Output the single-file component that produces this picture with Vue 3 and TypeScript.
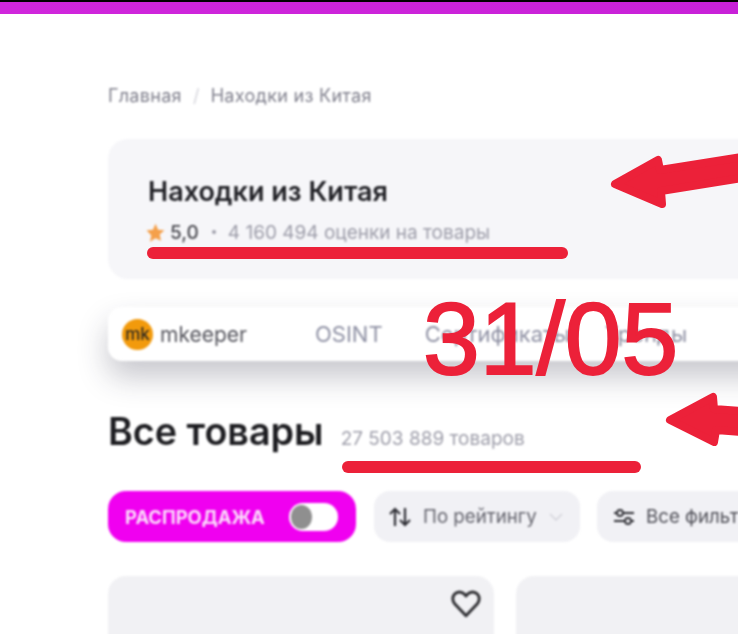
<template>
  <div class="page">
    <div class="topbar"></div>

    <main class="content">
      <nav class="crumbs">
        <span>Главная</span>
        <span class="crumbs__sep">/</span>
        <span>Находки из Китая</span>
      </nav>

      <section class="seller">
        <h1 class="seller__name">Находки из Китая</h1>
        <div class="seller__rating">
          <svg class="star" width="21" height="21" viewBox="0 0 24 24" fill="#f5a04a">
            <path d="M12 2l3 6.800 7.200.7-5.400 4.800 1.600 7.200L12 18.700l-6.400 3.800 1.600-7.200L1.800 9.500 9 8.800z"></path>
          </svg>
          <b>5,0</b>
          <span class="dot"></span>
          <span class="seller__count">4 160 494 оценки на товары</span>
        </div>
      </section>

      <section class="tabs">
        <div class="brand">
          <span class="brand__logo">mk</span>
          <span class="brand__name">mkeeper</span>
        </div>
        <span v-for="tab in tabs" :key="tab" class="tabs__item">{{ tab }}</span>
      </section>

      <section class="heading">
        <h2>Все товары</h2>
        <span>27 503 889 товаров</span>
      </section>

      <section class="filters">
        <div class="sale">
          <span class="sale__label">РАСПРОДАЖА</span>
          <span class="sale__toggle"><i></i></span>
        </div>
        <div class="chip chip--sort">
          <svg width="24" height="22" viewBox="0 0 24 22" fill="none" stroke="#2f2f35" stroke-width="2.200">
            <path d="M7 20V3M2 8l5-5 5 5"></path>
            <path d="M17 2v17M12 14l5 5 5-5"></path>
          </svg>
          <span>По рейтингу</span>
          <svg width="16" height="10" viewBox="0 0 16 10" fill="none" stroke="#d3d3da" stroke-width="1.500">
            <path d="M2 2l6 6 6-6"></path>
          </svg>
        </div>
        <div class="chip chip--filters">
          <svg width="22" height="20" viewBox="0 0 22 20" fill="none" stroke="#2f2f35" stroke-width="1.800">
            <path d="M1 6h20M1 14h20"></path>
            <circle cx="7" cy="6" r="3" fill="#f1f1f5"></circle>
            <circle cx="15" cy="14" r="3" fill="#f1f1f5"></circle>
          </svg>
          <span>Все фильтры</span>
        </div>
      </section>

      <section class="products">
        <article class="product">
          <svg class="product__fav" width="32" height="32" viewBox="0 0 24 24" fill="none" stroke="#2f2f33" stroke-width="2.200" stroke-linejoin="round">
            <path d="M12 21.500L3.500 12.500a5.300 5.300 0 0 1 0-7.200 4.900 4.900 0 0 1 7.200 0L12 6.700l1.300-1.400a4.900 4.900 0 0 1 7.200 0 5.300 5.300 0 0 1 0 7.200z"></path>
          </svg>
        </article>
        <article class="product"></article>
      </section>
    </main>

    <svg class="marks" width="738" height="634" viewBox="0 0 738 634">
      <g fill="none" stroke="#ec2139" stroke-linecap="round" stroke-linejoin="round">
        <path d="M153 253L562 253" stroke-width="12"></path>
        <path d="M348 467L635 467" stroke-width="12"></path>
      </g>
      <g fill="#ec2139" stroke="#ec2139" stroke-width="8" stroke-linejoin="round">
        <path d="M615 184L658 160L660 170L742 157L742 178L661 191L662 204z"></path>
        <path d="M670 420L713 397L714 409L742 411L742 432L716 430L714 442z"></path>
      </g>
    </svg>
    <div class="stamp">31/05</div>
  </div>
</template>

<script setup lang="ts">
const tabs: string[] = ['OSINT', 'Сертификаты', 'Тренды']
</script>

<style>
html,
body {
  margin: 0;
  background: #fff;
}
</style>

<style scoped>
.page {
  position: relative;
  width: 738px;
  height: 634px;
  overflow: hidden;
  background: #fff;
  font-family: Inter, "Liberation Sans", sans-serif;
}

.topbar {
  height: 12px;
  border-top: 2px solid #000;
  background: linear-gradient(90deg, #d026dc, #c821d8);
  filter: blur(0.5px);
}

.content {
  width: 760px;
  padding: 71px 0 0 108px;
  filter: blur(0.8px);
}

.crumbs {
  display: flex;
  gap: 11px;
  height: 20px;
  align-items: center;
  font-size: 18px;
  letter-spacing: 0.3px;
  color: #7f7f8c;
}

.crumbs__sep {
  color: #d5d5dc;
}

.seller {
  height: 140px;
  margin-top: 34px;
  padding: 38px 0 0 40px;
  box-sizing: border-box;
  border-radius: 20px;
  background: #f6f6f9;
}

.seller__name {
  margin: 0;
  font-size: 27px;
  line-height: 30px;
  font-weight: 600;
  letter-spacing: 0;
  color: #222227;
  white-space: nowrap;
}

.seller__rating {
  display: flex;
  align-items: center;
  margin: 15px 0 0 -3px;
  height: 20px;
  font-size: 19px;
  color: #9d9da9;
}

.seller__rating b {
  margin-left: 4px;
  font-weight: 500;
  color: #47474e;
}

.dot {
  width: 4px;
  height: 4px;
  margin: 0 12px 0 13px;
  border-radius: 50%;
  background: #9d9da9;
}

.seller__count {
  white-space: nowrap;
}

.tabs {
  display: flex;
  align-items: center;
  height: 54px;
  margin-top: 28px;
  padding-left: 14px;
  border-radius: 14px;
  background: #fff;
  box-shadow: 0 16px 30px rgba(40, 40, 60, 0.26);
}

.brand {
  display: flex;
  align-items: center;
  gap: 7px;
  width: 193px;
  flex-shrink: 0;
}

.brand__logo {
  display: flex;
  align-items: center;
  justify-content: center;
  width: 31px;
  height: 31px;
  border-radius: 50%;
  background: #f29a0c;
  font-size: 17px;
  font-weight: 500;
  color: #2d2820;
}

.brand__name {
  font-size: 21px;
  color: #55555d;
}

.tabs__item {
  margin-right: 35px;
  font-size: 22px;
  color: #8f91a4;
  white-space: nowrap;
}

.tabs__item:first-of-type {
  margin-right: 42px;
}

.heading {
  display: flex;
  align-items: baseline;
  gap: 17px;
  margin-top: 47px;
}

.heading h2 {
  margin: 0;
  font-size: 37.700px;
  line-height: 46px;
  font-weight: 600;
  color: #1d1d21;
  white-space: nowrap;
}

.heading span {
  font-size: 19px;
  color: #9d9da9;
  white-space: nowrap;
}

.filters {
  display: flex;
  margin-top: 37px;
}

.sale {
  display: flex;
  align-items: center;
  justify-content: space-between;
  width: 248px;
  height: 51px;
  margin-right: 18px;
  padding: 0 18px 0 17px;
  box-sizing: border-box;
  border-radius: 18px;
  background: #f000f0;
}

.sale__label {
  font-size: 18.400px;
  font-weight: 700;
  color: #fbdcfb;
}

.sale__toggle {
  display: flex;
  align-items: center;
  width: 49px;
  height: 28px;
  padding-left: 2px;
  box-sizing: border-box;
  border-radius: 14px;
  background: #fff;
}

.sale__toggle i {
  width: 21px;
  height: 24px;
  border-radius: 50%;
  background: #8f8f8f;
}

.chip {
  display: flex;
  align-items: center;
  height: 51px;
  box-sizing: border-box;
  border-radius: 16px;
  background: #f1f1f5;
  font-size: 18.700px;
  color: #64646d;
  white-space: nowrap;
  flex-shrink: 0;
}

.chip--sort {
  width: 206px;
  margin-right: 17px;
  padding-left: 14px;
  gap: 11px;
}

.chip--filters {
  width: 190px;
  padding-left: 16px;
  gap: 11px;
  color: #4e4e56;
}

.products {
  display: flex;
  gap: 22px;
  margin-top: 34px;
}

.product {
  position: relative;
  width: 386px;
  height: 240px;
  flex-shrink: 0;
  border-radius: 18px;
  background: #f1f1f4;
}

.product__fav {
  position: absolute;
  top: 11px;
  right: 12px;
}

.marks {
  position: absolute;
  top: 0;
  left: 0;
}

.stamp {
  position: absolute;
  top: 285px;
  left: 423px;
  font-family: "Liberation Sans", sans-serif;
  font-size: 102px;
  line-height: 108px;
  color: #ec2139;
  -webkit-text-stroke: 2px #ec2139;
}
</style>
